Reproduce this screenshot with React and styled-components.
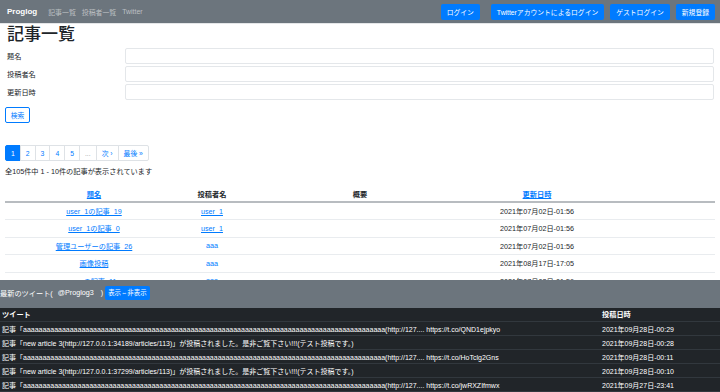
import React from "react"
import styled, { createGlobalStyle } from "styled-components"

const GlobalStyle = createGlobalStyle`
  html, body {
    margin: 0;
    padding: 0;
    background: #fff;
    font-family: "Liberation Sans", "Noto Sans CJK JP", sans-serif;
    font-size: 7.2px;
    color: #212529;
  }
  * { box-sizing: border-box; }
`

const Navbar = styled.nav`
  display: flex;
  align-items: center;
  height: 23px;
  padding: 0 5px 0 7px;
  background: #6c757d;
  box-shadow: 0 1px 0 #e4e6e8;
`

const Brand = styled.span`
  color: #fff;
  font-size: 8px;
  font-weight: 700;
  margin-right: 11px;
`

const NavLink = styled.span`
  color: rgba(255, 255, 255, 0.55);
  font-size: 6.9px;
  margin-right: 6px;
`

const NavRight = styled.div`
  margin-left: auto;
  display: flex;
  gap: 6px;
`

const NavButton = styled.button`
  height: 16px;
  padding: 0 6px;
  border: none;
  border-radius: 2px;
  background: #007bff;
  color: #fff;
  font-family: inherit;
  font-size: 6.8px;
  margin-right: ${p => p.$extra ? "5px" : "0"};
`

const Main = styled.main`
  padding: 0 5px;
`

const Title = styled.h1`
  margin: 0;
  padding: 1px 2px 0;
  height: 25px;
  font-size: 17px;
  font-weight: 500;
  line-height: 22px;
`

const FormRow = styled.div`
  display: grid;
  grid-template-columns: 120px 1fr;
  align-items: center;
  height: 16px;
  margin-bottom: 2px;
`

const Label = styled.label`
  padding-left: 2px;
`

const Input = styled.div`
  height: 16px;
  border: 1px solid #e4e7ea;
  border-radius: 2px;
  background: #fff;
  margin-right: 1px;
`

const SearchButton = styled.button`
  margin-top: 5px;
  width: 25px;
  height: 16px;
  padding: 0;
  background: #fff;
  border: 1px solid #007bff;
  border-radius: 2px;
  color: #007bff;
  font-family: inherit;
  font-size: 6.8px;
`

const Pagination = styled.ul`
  display: flex;
  list-style: none;
  margin: 22px 0 0;
  padding: 0;
`

const PageItem = styled.li`
  height: 16px;
  min-width: 15.8px;
  padding: 0 5px;
  display: flex;
  align-items: center;
  justify-content: center;
  border: 1px solid #dee2e6;
  margin-left: -1px;
  background: ${p => p.$active ? "#007bff" : "#fff"};
  border-color: ${p => p.$active ? "#007bff" : "#dee2e6"};
  color: ${p => p.$active ? "#fff" : p.$disabled ? "#9aa0a6" : "#007bff"};
  font-size: 6.8px;
  &:first-child {
    margin-left: 0;
    border-radius: 2px 0 0 2px;
  }
  &:last-child {
    border-radius: 0 2px 2px 0;
  }
`

const Summary = styled.p`
  margin: 6px 0 0;
  height: 10px;
  line-height: 10px;
`

const Table = styled.table`
  width: 100%;
  margin-top: 10px;
  border-collapse: collapse;
  table-layout: fixed;
`

const Th = styled.th`
  height: 15px;
  padding: 0;
  font-weight: 700;
  text-align: center;
  border-bottom: 2px solid #b8bcc0;
  vertical-align: middle;
`

const Td = styled.td`
  height: 17.5px;
  padding: 0;
  text-align: center;
  border-bottom: 1px solid #e9ecef;
  vertical-align: middle;
`

const A = styled.a`
  color: #007bff;
  text-decoration: ${p => p.$plain ? "none" : "underline"};
`

const TweetDock = styled.div`
  position: fixed;
  left: 0;
  right: 0;
  bottom: 0;
`

const DockBar = styled.div`
  display: flex;
  align-items: center;
  height: 28px;
  background: #6c757d;
  color: #fff;
  padding-bottom: 2px;
`

const Handle = styled.span`
  margin: 0 7px 0 5px;
`

const ToggleButton = styled.button`
  height: 14px;
  margin-left: 2px;
  padding: 0 3px;
  border: none;
  border-radius: 2px;
  background: #007bff;
  color: #fff;
  font-family: "Liberation Sans", "Noto Sans CJK JP", sans-serif;
  font-size: 6.4px;
  white-space: nowrap;
`

const TweetTable = styled.table`
  width: 100%;
  border-collapse: collapse;
  table-layout: fixed;
  background: #212529;
  color: #fff;
`

const TweetTh = styled.th`
  height: 14px;
  padding: 0 2px;
  text-align: left;
  font-weight: 700;
  border-bottom: 1px solid #32383e;
`

const TweetTd = styled.td`
  height: 14px;
  padding: 0 2px;
  font-size: 7px;
  white-space: nowrap;
  overflow: hidden;
  border-bottom: 1px solid #32383e;
`

const articles = [
  ["user_1の記事_19", "user_1", true, "2021年07月02日-01:56"],
  ["user_1の記事_0", "user_1", true, "2021年07月02日-01:56"],
  ["管理ユーザーの記事_26", "aaa", false, "2021年07月02日-01:56"],
  ["画像投稿", "aaa", false, "2021年08月17日-17:05"],
  ["aaaの記事_11", "aaa", false, "2021年07月02日-01:56"],
  ["aaaの記事_10", "aaa", false, "2021年07月02日-01:56"],
]

const longA = "a".repeat(93)
const tweets = [
  [`記事「${longA}(http://127.... https://t.co/QND1ejpkyo`, "2021年09月28日-00:29"],
  ["記事「new article 3(http://127.0.0.1:34189/articles/113)」が投稿されました。是非ご覧下さい!!!(テスト投稿です。)", "2021年09月28日-00:28"],
  [`記事「${longA}(http://127.... https://t.co/HoTclg2Gns`, "2021年09月28日-00:11"],
  ["記事「new article 3(http://127.0.0.1:37299/articles/113)」が投稿されました。是非ご覧下さい!!!(テスト投稿です。)", "2021年09月28日-00:10"],
  [`記事「${longA}(http://127.... https://t.co/jwRXZIfmwx`, "2021年09月27日-23:41"],
]

const App = () => {
  return (
    <>
      <GlobalStyle />
      <Navbar>
        <Brand>Proglog</Brand>
        <NavLink>記事一覧</NavLink>
        <NavLink>投稿者一覧</NavLink>
        <NavLink>Twitter</NavLink>
        <NavRight>
          <NavButton $extra>ログイン</NavButton>
          <NavButton>Twitterアカウントによるログイン</NavButton>
          <NavButton>ゲストログイン</NavButton>
          <NavButton>新規登録</NavButton>
        </NavRight>
      </Navbar>
      <Main>
        <Title>記事一覧</Title>
        <FormRow><Label>題名</Label><Input /></FormRow>
        <FormRow><Label>投稿者名</Label><Input /></FormRow>
        <FormRow><Label>更新日時</Label><Input /></FormRow>
        <SearchButton>検索</SearchButton>

        <Pagination>
          <PageItem $active>1</PageItem>
          <PageItem>2</PageItem>
          <PageItem>3</PageItem>
          <PageItem>4</PageItem>
          <PageItem>5</PageItem>
          <PageItem $disabled>...</PageItem>
          <PageItem>次 ›</PageItem>
          <PageItem>最後 »</PageItem>
        </Pagination>
        <Summary>全105件中 1 - 10件の記事が表示されています</Summary>

        <Table>
          <colgroup>
            <col style={{ width: 178 }} />
            <col style={{ width: 58 }} />
            <col style={{ width: 238 }} />
            <col style={{ width: 116 }} />
            <col />
          </colgroup>
          <thead>
            <tr>
              <Th><A>題名</A></Th>
              <Th>投稿者名</Th>
              <Th>概要</Th>
              <Th><A>更新日時</A></Th>
              <Th />
            </tr>
          </thead>
          <tbody>
            {articles.map(([title, author, underline, date], i) => (
              <tr key={i}>
                <Td><A>{title}</A></Td>
                <Td><A $plain={!underline}>{author}</A></Td>
                <Td />
                <Td>{date}</Td>
                <Td />
              </tr>
            ))}
          </tbody>
        </Table>
      </Main>

      <TweetDock>
        <DockBar>
          <span>最新のツイート(</span>
          <Handle>@Proglog3</Handle>
          <span>)</span>
          <ToggleButton>表示⇔非表示</ToggleButton>
        </DockBar>
        <TweetTable>
          <colgroup>
            <col style={{ width: 600 }} />
            <col />
          </colgroup>
          <thead>
            <tr>
              <TweetTh>ツイート</TweetTh>
              <TweetTh>投稿日時</TweetTh>
            </tr>
          </thead>
          <tbody>
            {tweets.map(([text, date], i) => (
              <tr key={i}>
                <TweetTd>{text}</TweetTd>
                <TweetTd>{date}</TweetTd>
              </tr>
            ))}
          </tbody>
        </TweetTable>
      </TweetDock>
    </>
  )
}

export default App
